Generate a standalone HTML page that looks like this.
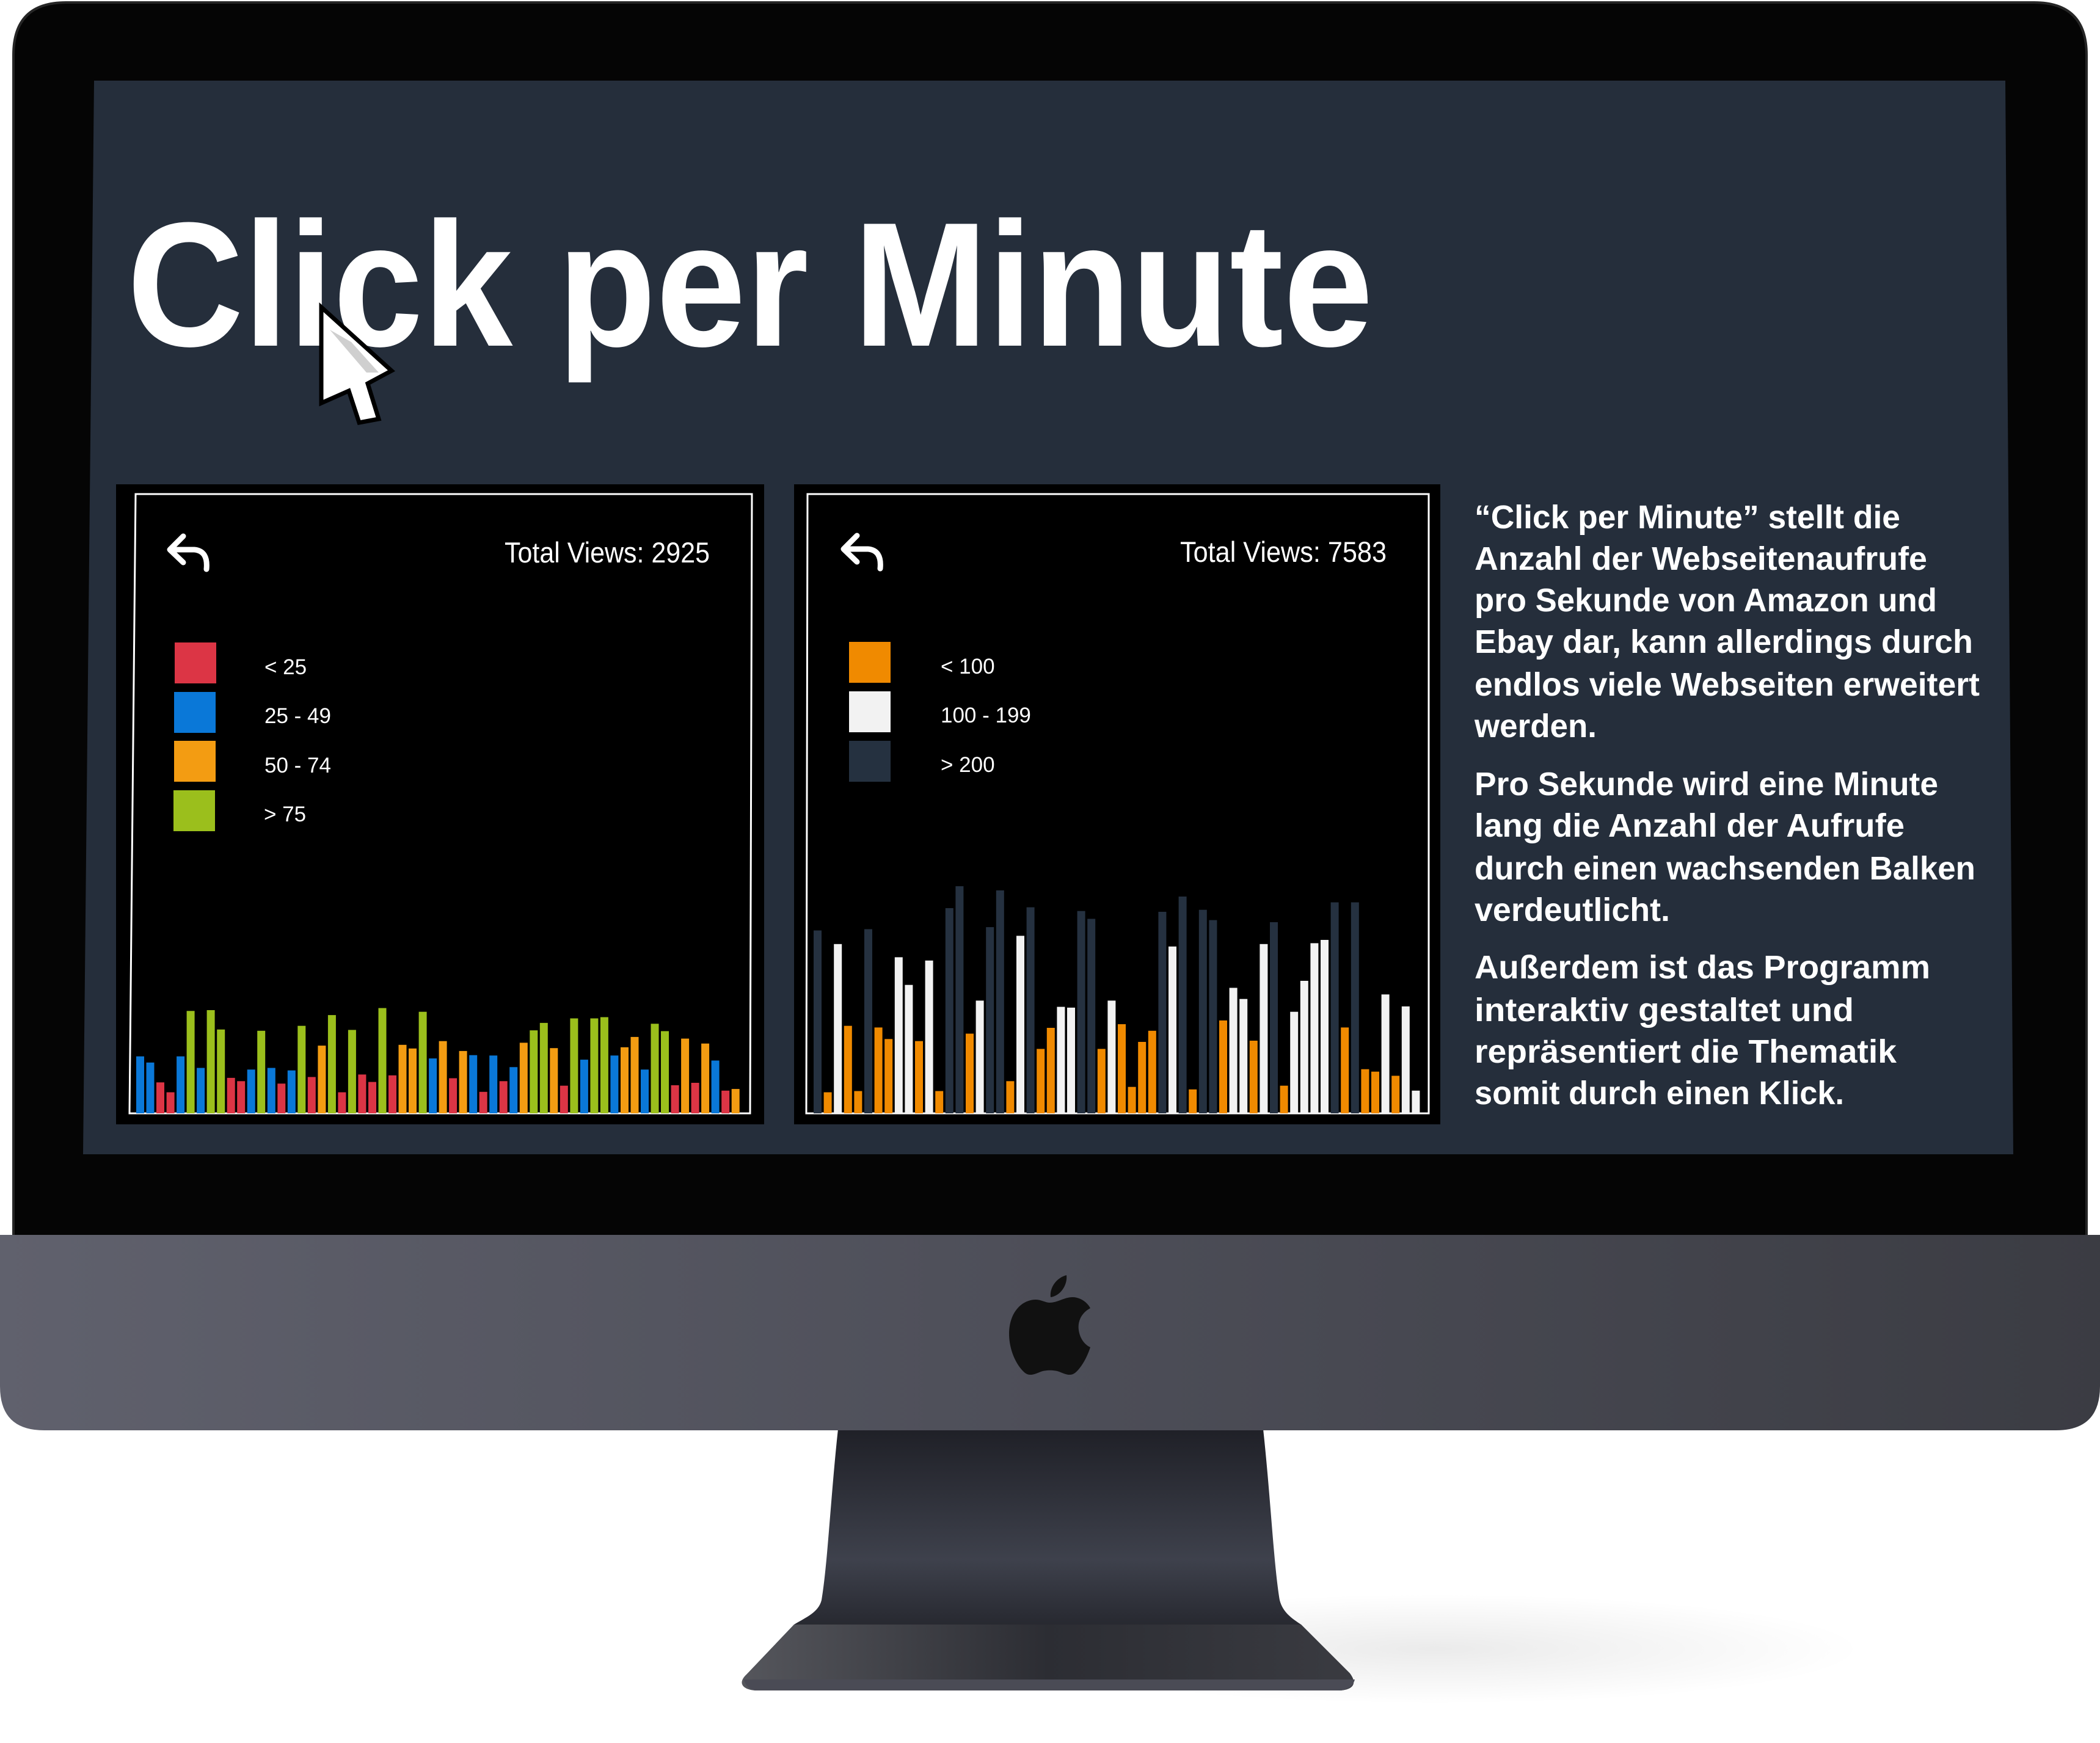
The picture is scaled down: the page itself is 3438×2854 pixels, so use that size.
<!DOCTYPE html>
<html><head><meta charset="utf-8">
<style>
html,body{margin:0;padding:0;background:#fff;}
svg{display:block;}
.t{font-family:"Liberation Sans",sans-serif;fill:#fff;}
</style></head>
<body>
<svg id="s" width="3438" height="2854" viewBox="0 0 3438 2854" xmlns="http://www.w3.org/2000/svg">
<defs>
<linearGradient id="chin" x1="0" y1="0" x2="1" y2="0">
<stop offset="0" stop-color="#60616d"/><stop offset="0.5" stop-color="#4d4e58"/><stop offset="1" stop-color="#3b3c43"/>
</linearGradient>
<linearGradient id="stand" x1="0" y1="0" x2="0" y2="1">
<stop offset="0" stop-color="#1f2027"/><stop offset="0.5" stop-color="#3e414c"/><stop offset="0.85" stop-color="#1e1f25"/><stop offset="1" stop-color="#2a2b31"/>
</linearGradient>
<linearGradient id="foot" x1="0" y1="0" x2="1" y2="0">
<stop offset="0" stop-color="#55565c"/><stop offset="0.5" stop-color="#2c2d33"/><stop offset="1" stop-color="#3a3b41"/>
</linearGradient>
<radialGradient id="shadow" cx="0.5" cy="0.5" r="0.5">
<stop offset="0" stop-color="#000" stop-opacity="0.08"/><stop offset="1" stop-color="#000" stop-opacity="0"/>
</radialGradient>
</defs>
<ellipse cx="2350" cy="2700" rx="700" ry="90" fill="url(#shadow)"/>
<path d="M1372 2340 L2068 2340 C2080 2450 2085 2560 2095 2620 C2100 2640 2115 2650 2130 2660 L2210 2740 C2225 2760 2210 2768 2190 2768 L1240 2768 C1220 2768 1205 2758 1222 2742 L1300 2660 C1320 2648 1340 2640 1345 2620 C1355 2560 1360 2450 1372 2340 Z" fill="url(#stand)"/>
<path d="M1300 2660 L2130 2660 L2210 2740 C2225 2760 2210 2768 2190 2768 L1240 2768 C1220 2768 1205 2758 1222 2742 Z" fill="url(#foot)"/>
<path d="M1218 2750 L2218 2750 C2215 2762 2205 2768 2190 2768 L1240 2768 C1228 2768 1220 2760 1218 2750Z" fill="#4a4b55"/>
<path d="M0 2022 L3438 2022 L3438 2270 Q3438 2342 3366 2342 L72 2342 Q0 2342 0 2270 Z" fill="url(#chin)"/>
<path d="M22 2022 L22 90 Q22 4 108 4 L3330 4 Q3416 4 3416 90 L3416 2022 Z" fill="#050505"/>
<path d="M22 2022 L22 90 Q22 4 108 4 L3330 4 Q3416 4 3416 90 L3416 2022" fill="none" stroke="#262626" stroke-width="4"/>
<polygon points="154,132 3283,132 3296,1890 136,1890" fill="#252e3b"/>
<text class="t" x="208" y="566" font-size="290" font-weight="bold" textLength="2040" lengthAdjust="spacingAndGlyphs">Click per Minute</text>
<polygon points="526,503 526,660 571,640 588,692 620,686 602,628 641,607" fill="#fff" stroke="#000" stroke-width="7" stroke-linejoin="miter"/>
<polygon points="540,540 600,610 620,610 575,560" fill="#cfcfcf"/>
<!-- chart 1 -->
<rect x="190" y="793" width="1061" height="1048" fill="#000"/>
<path d="M222 809 L1231 809 L1228 1823 L212 1823 Z" fill="none" stroke="#fff" stroke-width="3"/>
<path d="M300 878 L278 900 L300 921 M282 900 L318 900 Q341 902 338 932" fill="none" stroke="#fff" stroke-width="9" stroke-linecap="round" stroke-linejoin="round"/>
<text class="t" x="826" y="921" font-size="47" textLength="336" lengthAdjust="spacingAndGlyphs">Total Views: 2925</text>
<rect x="286" y="1052" width="68" height="67" fill="#dc3545"/>
<rect x="285" y="1133" width="68" height="67" fill="#0a78d8"/>
<rect x="285" y="1213" width="68" height="67" fill="#f39c12"/>
<rect x="284" y="1294" width="68" height="67" fill="#9bbf1c"/>
<text class="t" x="433" y="1104" font-size="35">&lt; 25</text>
<text class="t" x="433" y="1184" font-size="35">25 - 49</text>
<text class="t" x="433" y="1265" font-size="35">50 - 74</text>
<text class="t" x="432" y="1345" font-size="35">&gt; 75</text>
<g id="b1"></g>
<!-- chart 2 -->
<rect x="1300" y="793" width="1058" height="1048" fill="#000"/>
<path d="M1322 809 L2339 809 L2339 1823 L1320 1823 Z" fill="none" stroke="#fff" stroke-width="3"/>
<path d="M1403 877 L1381 899 L1403 920 M1385 899 L1421 899 Q1444 901 1441 931" fill="none" stroke="#fff" stroke-width="9" stroke-linecap="round" stroke-linejoin="round"/>
<text class="t" x="1932" y="920" font-size="47" textLength="338" lengthAdjust="spacingAndGlyphs">Total Views: 7583</text>
<rect x="1390" y="1051" width="68" height="67" fill="#f08a00"/>
<rect x="1390" y="1132" width="68" height="67" fill="#f2f2f2"/>
<rect x="1390" y="1213" width="68" height="67" fill="#253140"/>
<text class="t" x="1540" y="1103" font-size="35">&lt; 100</text>
<text class="t" x="1540" y="1183" font-size="35">100 - 199</text>
<text class="t" x="1540" y="1264" font-size="35">&gt; 200</text>
<g id="b2"></g>
<g class="t" font-size="54" font-weight="bold">
<text x="2414" y="865" textLength="697" lengthAdjust="spacingAndGlyphs">“Click per Minute” stellt die</text>
<text x="2414" y="933" textLength="741" lengthAdjust="spacingAndGlyphs">Anzahl der Webseitenaufrufe</text>
<text x="2414" y="1001" textLength="757" lengthAdjust="spacingAndGlyphs">pro Sekunde von Amazon und</text>
<text x="2414" y="1069" textLength="816" lengthAdjust="spacingAndGlyphs">Ebay dar, kann allerdings durch</text>
<text x="2414" y="1139" textLength="827" lengthAdjust="spacingAndGlyphs">endlos viele Webseiten erweitert</text>
<text x="2414" y="1207" textLength="200" lengthAdjust="spacingAndGlyphs">werden.</text>
<text x="2414" y="1302" textLength="759" lengthAdjust="spacingAndGlyphs">Pro Sekunde wird eine Minute</text>
<text x="2414" y="1370" textLength="704" lengthAdjust="spacingAndGlyphs">lang die Anzahl der Aufrufe</text>
<text x="2414" y="1440" textLength="820" lengthAdjust="spacingAndGlyphs">durch einen wachsenden Balken</text>
<text x="2414" y="1508" textLength="320" lengthAdjust="spacingAndGlyphs">verdeutlicht.</text>
<text x="2414" y="1602" textLength="746" lengthAdjust="spacingAndGlyphs">Außerdem ist das Programm</text>
<text x="2414" y="1672" textLength="621" lengthAdjust="spacingAndGlyphs">interaktiv gestaltet und</text>
<text x="2414" y="1740" textLength="691" lengthAdjust="spacingAndGlyphs">repräsentiert die Thematik</text>
<text x="2414" y="1808" textLength="605" lengthAdjust="spacingAndGlyphs">somit durch einen Klick.</text>
</g>
<g transform="translate(1652,2088)">
<path d="M66 45 C80 45 90 36 104 36 C116 36 128 44 133 54 C118 62 112 76 114 90 C116 104 124 114 133 118 C128 134 118 152 108 160 C100 166 92 162 82 158 C74 155 60 155 52 158 C42 162 34 166 26 160 C10 146 0 120 0 96 C0 62 20 40 44 40 C52 40 60 45 66 45 Z" fill="#111"/>
<path d="M68 36 C66 20 78 4 94 0 C96 16 84 34 68 36 Z" fill="#111"/>
</g>
</svg>
<script>
(function(){
var NS="http://www.w3.org/2000/svg";
var C1={r:"#dc3545",b:"#0a78d8",o:"#f39c12",g:"#9bbf1c"};
var d1="b1390 b1405 r1453 r1477 b1390 g1280 b1418 g1278 g1325 r1442 r1450 b1422 g1328 b1418 r1456 b1424 g1316 r1440 o1364 g1290 r1477 g1326 r1434 r1452 g1273 r1436 o1362 o1371 g1282 b1395 o1353 r1443 o1377 b1387 r1476 b1388 r1450 b1416 o1357 g1327 g1309 o1370 r1461 g1298 b1398 g1298 g1295 b1388 o1368 o1343 b1422 g1311 g1329 r1460 o1347 r1454 o1359 b1400 r1473 o1469".split(" ");
var C2={d:"#253140",o:"#f08a00",w:"#f2f2f2"};
var d2="d1085 o1477 w1118 o1316 o1474 d1082 o1320 o1348 w1150 w1217 o1353 w1158 o1474 d1031 d978 o1335 w1255 d1077 d988 o1450 w1098 d1029 o1372 o1321 w1270 w1272 d1038 d1057 o1372 w1255 o1312 o1464 o1355 o1328 d1040 w1124 d1003 o1470 d1035 d1060 o1303 w1224 w1251 o1352 w1118 d1065 o1461 w1282 w1207 w1116 w1108 d1017 o1320 d1017 o1421 o1427 w1240 o1437 w1269 w1473".split(" ");
function draw(id,data,cols,x0,pitch,base){
 var g=document.getElementById(id);
 data.forEach(function(s,i){
  var h=(1528-parseInt(s.slice(1)))/1.479;
  var r=document.createElementNS(NS,"rect");
  r.setAttribute("x",(x0+i*pitch).toFixed(1));
  r.setAttribute("y",(base-h).toFixed(1));
  r.setAttribute("width","13");
  r.setAttribute("height",h.toFixed(1));
  r.setAttribute("fill",cols[s[0]]);
  g.appendChild(r);
 });
}
draw("b1",d1,C1,223,16.52,1823);
draw("b2",d2,C2,1332,16.6,1823);
})();
</script>
</body></html>
